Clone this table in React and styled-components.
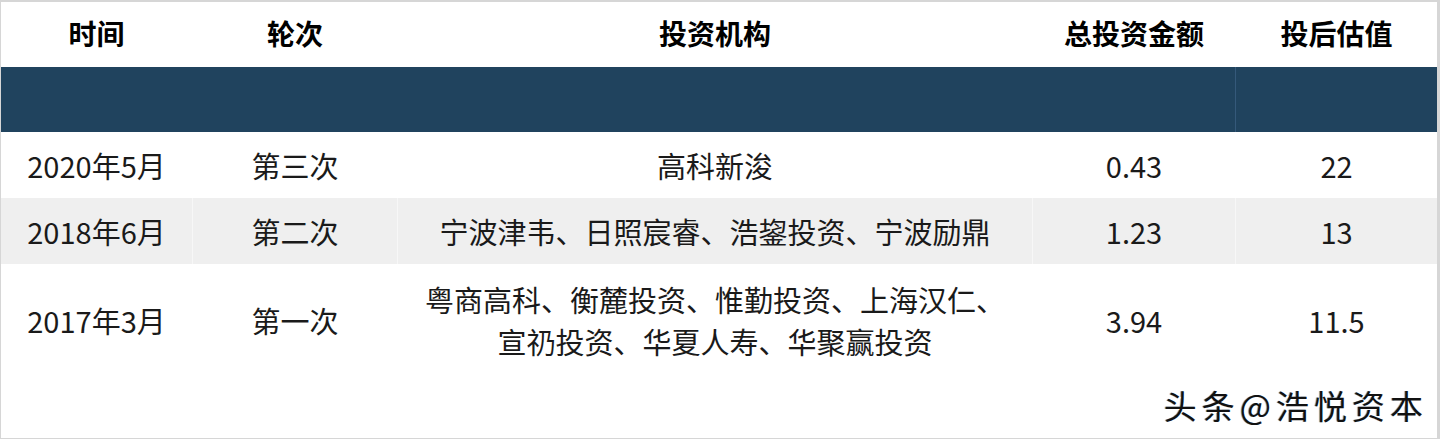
import React from "react";
import styled, { createGlobalStyle } from "styled-components";

const GlobalStyle = createGlobalStyle`
  html, body {
    margin: 0;
    padding: 0;
    background: #ffffff;
  }
  body {
    font-family: "Noto Sans CJK SC", "Noto Sans", sans-serif;
  }
`;

const Frame = styled.div`
  position: relative;
  width: 1440px;
  height: 439px;
  box-sizing: border-box;
  border: 1px solid #d6d6d6;
  border-top-width: 2px;
  border-right-width: 3px;
  background: #ffffff;
  overflow: hidden;
`;

const Row = styled.div`
  display: grid;
  grid-template-columns: 192px 205px 635px 203px 1fr;
  height: ${(p) => p.$h}px;
  background: ${(p) => p.$bg || "transparent"};
`;

const Cell = styled.div`
  display: flex;
  align-items: center;
  justify-content: center;
  text-align: center;
  font-size: ${(p) => (p.$head ? "28px" : "29px")};
  font-weight: ${(p) => (p.$head ? 700 : 400)};
  color: ${(p) => (p.$head ? "#000000" : "#1a1a1a")};
  line-height: 42px;
  border-right: 1px solid ${(p) => p.$line || "transparent"};
  padding-bottom: ${(p) => (p.$head ? "4px" : "1px")};
  &:last-child {
    border-right: none;
  }
`;

const Watermark = styled.div`
  position: absolute;
  right: 9px;
  bottom: 16px;
  font-size: 33px;
  font-weight: 400;
  letter-spacing: 5px;
  color: #111111;
  text-shadow: 2px 1px 0 #ffffff, -1px 0 0 rgba(40, 120, 190, 0.55);
  line-height: 1;
`;

const header = ["时间", "轮次", "投资机构", "总投资金额", "投后估值"];

const rows = [
  {
    cells: ["2020年5月", "第三次", "高科新浚", "0.43", "22"],
    h: 66,
  },
  {
    cells: ["2018年6月", "第二次", "宁波津韦、日照宸睿、浩鋆投资、宁波励鼎", "1.23", "13"],
    h: 66,
    bg: "#efefef",
    line: "#f7f7f7",
  },
  {
    cells: [
      "2017年3月",
      "第一次",
      <>
        粤商高科、衡麓投资、惟勤投资、上海汉仁、
        <br />
        宣礽投资、华夏人寿、华聚赢投资
      </>,
      "3.94",
      "11.5",
    ],
    h: 112,
  },
];

export default function App() {
  return (
    <>
      <GlobalStyle />
      <Frame>
        <Row $h={65}>
          {header.map((t) => (
            <Cell key={t} $head>
              {t}
            </Cell>
          ))}
        </Row>
        <Row $h={65} $bg="#20435e">
          <Cell />
          <Cell />
          <Cell />
          <Cell $line="#35597a" />
          <Cell />
        </Row>
        {rows.map((r, i) => (
          <Row key={i} $h={r.h} $bg={r.bg}>
            {r.cells.map((c, j) => (
              <Cell key={j} $line={r.line}>
                {c}
              </Cell>
            ))}
          </Row>
        ))}
        <Watermark>头条@浩悦资本</Watermark>
      </Frame>
    </>
  );
}
